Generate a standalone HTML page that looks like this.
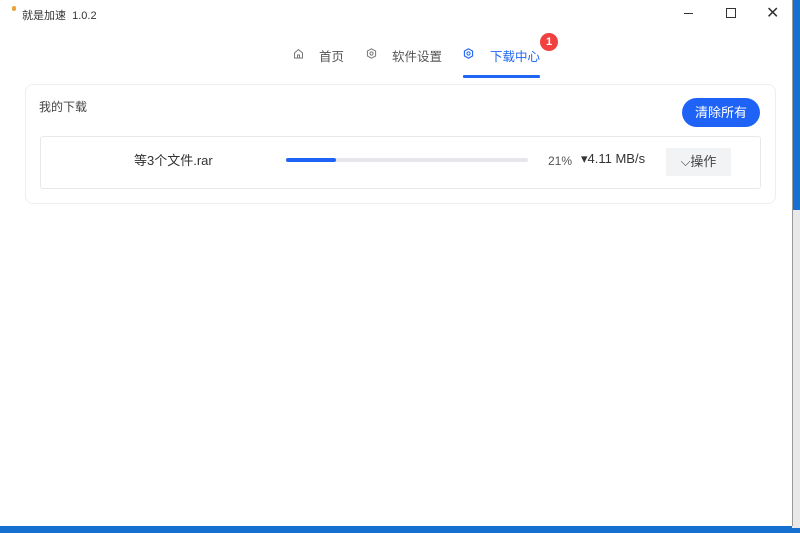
<!DOCTYPE html>
<html><head><meta charset="utf-8"><style>
body{margin:0;width:800px;height:533px;overflow:hidden;background:#1570d0;font-family:"Liberation Sans","Noto Sans CJK SC",sans-serif;position:relative}
.strip{position:absolute;left:792px;top:210px;width:8px;height:318px;background:#e8e8e8}
.win{position:absolute;left:0;top:0;width:792px;height:526px;background:#fff;border-right:1px solid #999}
.t{position:absolute;font-size:12px;color:#333;white-space:nowrap}
.nav{position:absolute;top:46px;font-size:12.5px;color:#555;white-space:nowrap}
svg.ic{position:absolute;top:48px;width:11px;height:11px}
</style></head><body>
<div class="strip"></div>
<div class="win">
<div style="position:absolute;left:12px;top:6px;width:4px;height:5px;background:#e8a33a;border-radius:2px"></div>
<div class="t" style="left:22px;top:7px;font-size:11px">就是加速&nbsp; 1.0.2</div>
<div style="position:absolute;left:684px;top:13px;width:9px;height:1px;background:#333"></div>
<div style="position:absolute;left:726px;top:8px;width:8px;height:8px;border:1px solid #333"></div>
<div class="t" style="left:766px;top:3px;font-size:16px;font-weight:300">✕</div>
<svg class="ic" style="left:293px" viewBox="0 0 11 11"><path d="M1.5 5 L5.5 1.5 L9.5 5 V10 H1.5 Z M4.5 10 V7 H6.5 V10" fill="none" stroke="#777" stroke-width="1"/></svg>
<div class="nav" style="left:319px">首页</div>
<svg class="ic" style="left:366px" viewBox="0 0 11 11"><path d="M5.5 0.8 L9.6 3.1 V7.9 L5.5 10.2 L1.4 7.9 V3.1 Z" fill="none" stroke="#777" stroke-width="1"/><circle cx="5.5" cy="5.5" r="1.6" fill="none" stroke="#777"/></svg>
<div class="nav" style="left:392px">软件设置</div>
<svg class="ic" style="left:463px" viewBox="0 0 11 11"><path d="M5.5 0.8 L9.6 3.1 V7.9 L5.5 10.2 L1.4 7.9 V3.1 Z" fill="none" stroke="#1f66f5" stroke-width="1.1"/><circle cx="5.5" cy="5.5" r="1.6" fill="none" stroke="#1f66f5"/></svg>
<div class="nav" style="left:490px;color:#1f66f5">下载中心</div>
<div style="position:absolute;left:540px;top:33px;width:18px;height:18px;border-radius:9px;background:#f04040;color:#fff;font-size:11px;font-weight:bold;text-align:center;line-height:18px">1</div>
<div style="position:absolute;left:463px;top:75px;width:77px;height:3px;background:#1f66f5;border-radius:1px"></div>
<div style="position:absolute;left:25px;top:84px;width:749px;height:118px;border:1px solid #eee;border-radius:8px"></div>
<div class="t" style="left:39px;top:98px;color:#444">我的下载</div>
<div style="position:absolute;left:682px;top:98px;width:78px;height:29px;border-radius:15px;background:#1f63f6;color:#fff;font-size:13px;text-align:center;line-height:29px">清除所有</div>
<div style="position:absolute;left:40px;top:136px;width:719px;height:51px;border:1px solid #e8e8ea;border-radius:3px"></div>
<div class="t" style="left:134px;top:150px;font-size:13px">等3个文件.rar</div>
<div style="position:absolute;left:286px;top:158px;width:242px;height:4px;background:#e5e7eb;border-radius:2px"><div style="width:50px;height:4px;background:#1f63f6;border-radius:2px"></div></div>
<div class="t" style="left:548px;top:154px;color:#555">21%</div>
<div class="t" style="left:581px;top:151px;font-size:13px">▾4.11 MB/s</div>
<div style="position:absolute;left:666px;top:148px;width:65px;height:28px;background:#f2f3f5;font-size:13px;color:#444;text-align:center;line-height:28px">⌵操作</div>
</div>
</body></html>
